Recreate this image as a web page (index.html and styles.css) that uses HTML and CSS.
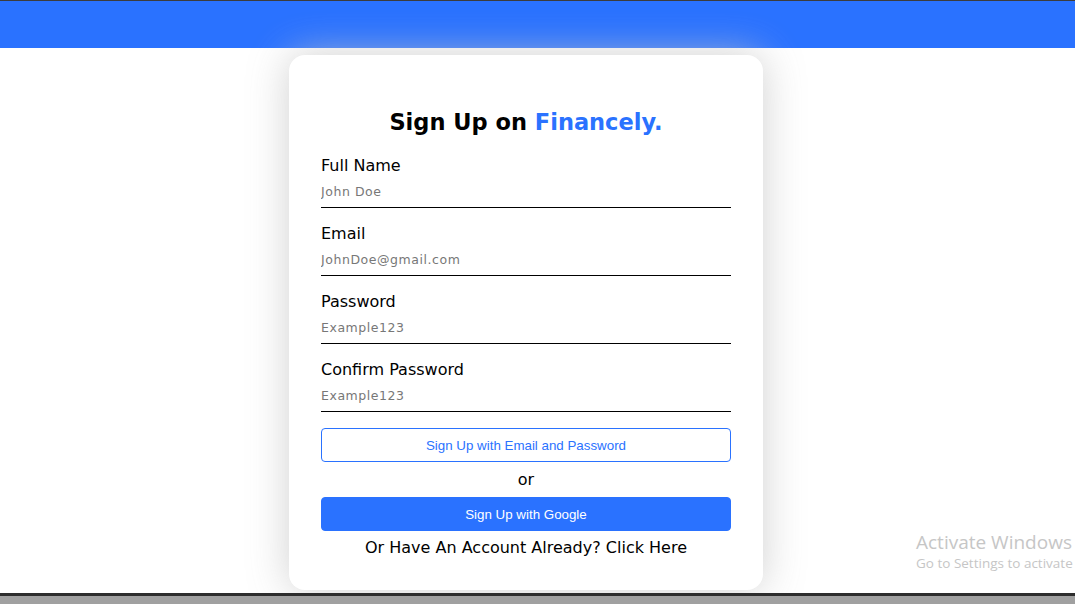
FILE: index.html
```html
<!DOCTYPE html>
<html lang="en">
<head>
<meta charset="utf-8">
<title>Sign Up - Financely</title>
<link rel="stylesheet" href="styles.css">
</head>
<body>
  <header class="topbar"></header>
  <main class="main">
    <form class="card">
      <h1 class="title">Sign Up on <span class="brand">Financely.</span></h1>
      <div class="field">
        <label class="label">Full Name</label>
        <input class="input" type="text" placeholder="John Doe">
      </div>
      <div class="field">
        <label class="label">Email</label>
        <input class="input" type="email" placeholder="JohnDoe@gmail.com">
      </div>
      <div class="field">
        <label class="label">Password</label>
        <input class="input" type="password" placeholder="Example123">
      </div>
      <div class="field">
        <label class="label">Confirm Password</label>
        <input class="input" type="password" placeholder="Example123">
      </div>
      <button type="button" class="btn btn-outline">Sign Up with Email and Password</button>
      <p class="or">or</p>
      <button type="button" class="btn btn-fill">Sign Up with Google</button>
      <p class="switch">Or Have An Account Already? Click Here</p>
    </form>
  </main>
  <footer class="taskbar"></footer>
  <div class="watermark">
    <div class="wm-title">Activate Windows</div>
    <div class="wm-sub">Go to Settings to activate Windows.</div>
  </div>
</body>
</html>
```
FILE: styles.css
```css
* { box-sizing: border-box; }
html, body { margin: 0; padding: 0; }
body {
  width: 1075px;
  height: 604px;
  overflow: hidden;
  display: flex;
  flex-direction: column;
  background: #ffffff;
  font-family: "DejaVu Sans", sans-serif;
  color: #000;
  position: relative;
}
.topbar {
  height: 48px;
  flex: none;
  background: #2a72ff;
  border-top: 1px solid #3c3c3c;
}
.main {
  flex: 1;
  display: flex;
  justify-content: center;
  align-items: flex-start;
  padding-top: 7px;
  padding-right: 23px;
}
.card {
  width: 474px;
  height: 535px;
  background: #fff;
  border-radius: 16px;
  box-shadow: 0 0 40px rgba(200, 200, 200, 0.85);
  padding: 0 32px;
  display: flex;
  flex-direction: column;
}
.title {
  margin: 51px 0 0;
  height: 33px;
  font-size: 22.5px;
  font-weight: bold;
  text-align: center;
  line-height: 33px;
}
.brand { color: #2a72ff; }
.field {
  display: flex;
  flex-direction: column;
}
.label {
  margin-top: 15px;
  font-size: 16px;
  line-height: 21px;
  height: 21px;
}
.field:first-of-type .label { margin-top: 16px; }
.input {
  border: none;
  border-bottom: 1px solid #000;
  outline: none;
  margin-top: 4px;
  height: 28px;
  padding: 0 0 5px;
  font-family: "DejaVu Sans", sans-serif;
  font-size: 12.5px;
  letter-spacing: 0.55px;
  color: #000;
  background: transparent;
}
.input::placeholder { color: #777; }
.btn {
  height: 34px;
  border-radius: 4px;
  font-family: "Liberation Sans", Arial, sans-serif;
  font-size: 13.333px;
  cursor: pointer;
}
.btn-outline {
  margin-top: 16px;
  background: #fff;
  border: 1px solid #2a72ff;
  color: #2a72ff;
}
.btn-fill {
  background: #2a72ff;
  border: 1px solid #2a72ff;
  color: #fff;
}
.or {
  margin: 0;
  height: 35px;
  line-height: 35px;
  text-align: center;
  font-size: 16px;
}
.switch {
  margin: 0;
  height: 34px;
  line-height: 34px;
  text-align: center;
  font-size: 16px;
}
.taskbar {
  flex: none;
  height: 11px;
  position: relative;
  background: #a0a0a0;
  border-top: 3px solid #2d2d2d;
}
.watermark {
  position: absolute;
  left: 916px;
  top: 530px;
  white-space: nowrap;
  font-family: "Open Sans", "DejaVu Sans", sans-serif;
  color: #c6c6c6;
}
.wm-title { font-size: 19px; line-height: 24px; }
.wm-sub { font-size: 13.5px; line-height: 19px; }
```
